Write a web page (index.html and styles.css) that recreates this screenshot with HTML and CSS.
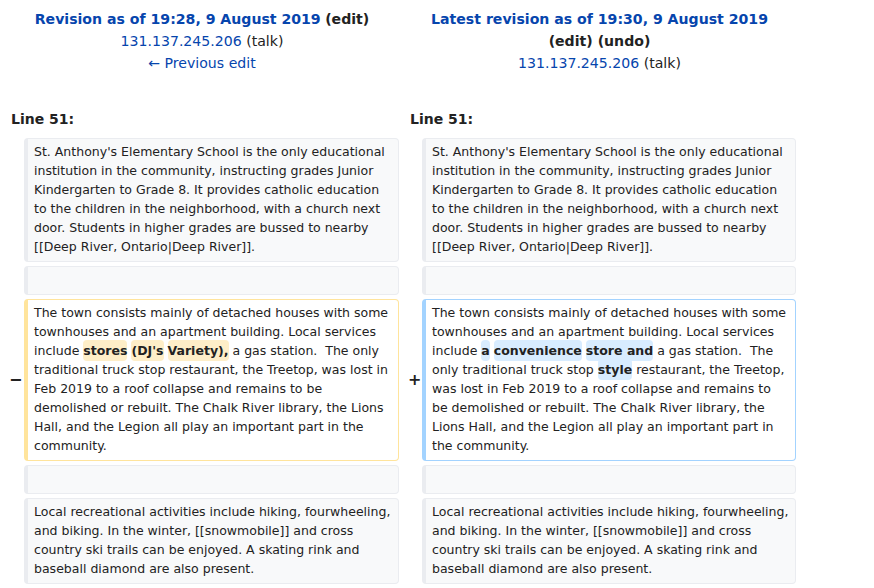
FILE: index.html
```html
<!DOCTYPE html>
<html>
<head>
<meta charset="utf-8">
<link rel="stylesheet" href="styles.css">
</head>
<body>
<div class="diff">
  <div class="title"><a class="strong" href="#">Revision as of 19:28, 9 August 2019</a> <span class="strong dark nowrap">(edit)</span><br><a href="#">131.137.245.206</a> <span class="dark">(talk)</span><br><a href="#">← Previous edit</a></div>
  <div class="title"><a class="strong" href="#">Latest revision as of 19:30, 9 August 2019</a> <span class="strong dark nowrap">(edit) (undo)</span><br><a href="#">131.137.245.206</a> <span class="dark">(talk)</span></div>

  <div class="lineno">Line 51:</div>
  <div class="lineno">Line 51:</div>

  <div class="empty"></div>
  <div class="cell context">St. Anthony's Elementary School is the only educational institution in the community, instructing grades Junior Kindergarten to Grade 8. It provides catholic education to the children in the neighborhood, with a church next door. Students in higher grades are bussed to nearby [[Deep River, Ontario|Deep River]].</div>
  <div class="empty"></div>
  <div class="cell context">St. Anthony's Elementary School is the only educational institution in the community, instructing grades Junior Kindergarten to Grade 8. It provides catholic education to the children in the neighborhood, with a church next door. Students in higher grades are bussed to nearby [[Deep River, Ontario|Deep River]].</div>

  <div class="empty"></div>
  <div class="cell context"><br></div>
  <div class="empty"></div>
  <div class="cell context"><br></div>

  <div class="marker minus">−</div>
  <div class="cell deleted">The town consists mainly of detached houses with some townhouses and an apartment building. Local services include <del class="chg">stores</del> <del class="chg">(DJ's</del> <del class="chg">Variety),</del> a gas station.  The only traditional truck stop restaurant, the Treetop, was lost in Feb 2019 to a roof collapse and remains to be demolished or rebuilt. The Chalk River library, the Lions Hall, and the Legion all play an important part in the community.</div>
  <div class="marker plus">+</div>
  <div class="cell added">The town consists mainly of detached houses with some townhouses and an apartment building. Local services include <ins class="chg">a</ins> <ins class="chg">convenience</ins> <ins class="chg">store and</ins> a gas station.  The only traditional truck stop <ins class="chg">style</ins> restaurant, the Treetop, was lost in Feb 2019 to a roof collapse and remains to be demolished or rebuilt. The Chalk River library, the Lions Hall, and the Legion all play an important part in the community.</div>

  <div class="empty"></div>
  <div class="cell context"><br></div>
  <div class="empty"></div>
  <div class="cell context"><br></div>

  <div class="empty"></div>
  <div class="cell context">Local recreational activities include hiking, fourwheeling, and biking. In the winter, [[snowmobile]] and cross country ski trails can be enjoyed. A skating rink and baseball diamond are also present.</div>
  <div class="empty"></div>
  <div class="cell context">Local recreational activities include hiking, fourwheeling, and biking. In the winter, [[snowmobile]] and cross country ski trails can be enjoyed. A skating rink and baseball diamond are also present.</div>
</div>
</body>
</html>
```
FILE: styles.css
```css
html, body {
  margin: 0;
  padding: 0;
  background: #fff;
}
body {
  font-family: "DejaVu Sans", sans-serif;
  color: #222;
  font-size: 14px;
  line-height: 22px;
}
a {
  color: #0645ad;
  text-decoration: none;
}
.diff {
  display: grid;
  grid-template-columns: 15px 375px 15px 374px;
  column-gap: 4px;
  row-gap: 4px;
  margin-left: 5px;
  padding-top: 8px;
}
.title {
  grid-column: span 2;
  text-align: center;
  font-size: 14.1px;
  line-height: 22px;
}
.strong {
  font-weight: bold;
}
.dark {
  color: #222;
}
.nowrap {
  white-space: nowrap;
}
.lineno {
  grid-column: span 2;
  font-weight: bold;
  padding: 30px 6px 4px;
}
.lineno + .lineno {
  padding-left: 7px;
}
.empty {
  min-width: 0;
}
.marker {
  display: flex;
  align-items: center;
  font-weight: bold;
  font-size: 16px;
  line-height: 16px;
}
.marker.minus {
  padding-left: 4px;
}
.marker.plus {
  padding-left: 5px;
}
.cell {
  font-size: 12.52px;
  line-height: 19px;
  white-space: pre-wrap;
  word-wrap: break-word;
  border-style: solid;
  border-width: 1px 1px 1px 4px;
  border-radius: 4px;
  padding: 3px 6px 5px 6px;
  min-height: 19px;
}
.context {
  background: #f8f9fa;
  border-color: #eaecf0;
}
.deleted {
  background: #fff;
  border-color: #ffe49c;
}
.added {
  background: #fff;
  border-color: #a3d3ff;
}
.chg {
  font-weight: bold;
  text-decoration: none;
  border-radius: 4px;
  padding: 3px 0;
}
del.chg {
  background: #feeec8;
}
ins.chg {
  background: #d8ecff;
}
```
